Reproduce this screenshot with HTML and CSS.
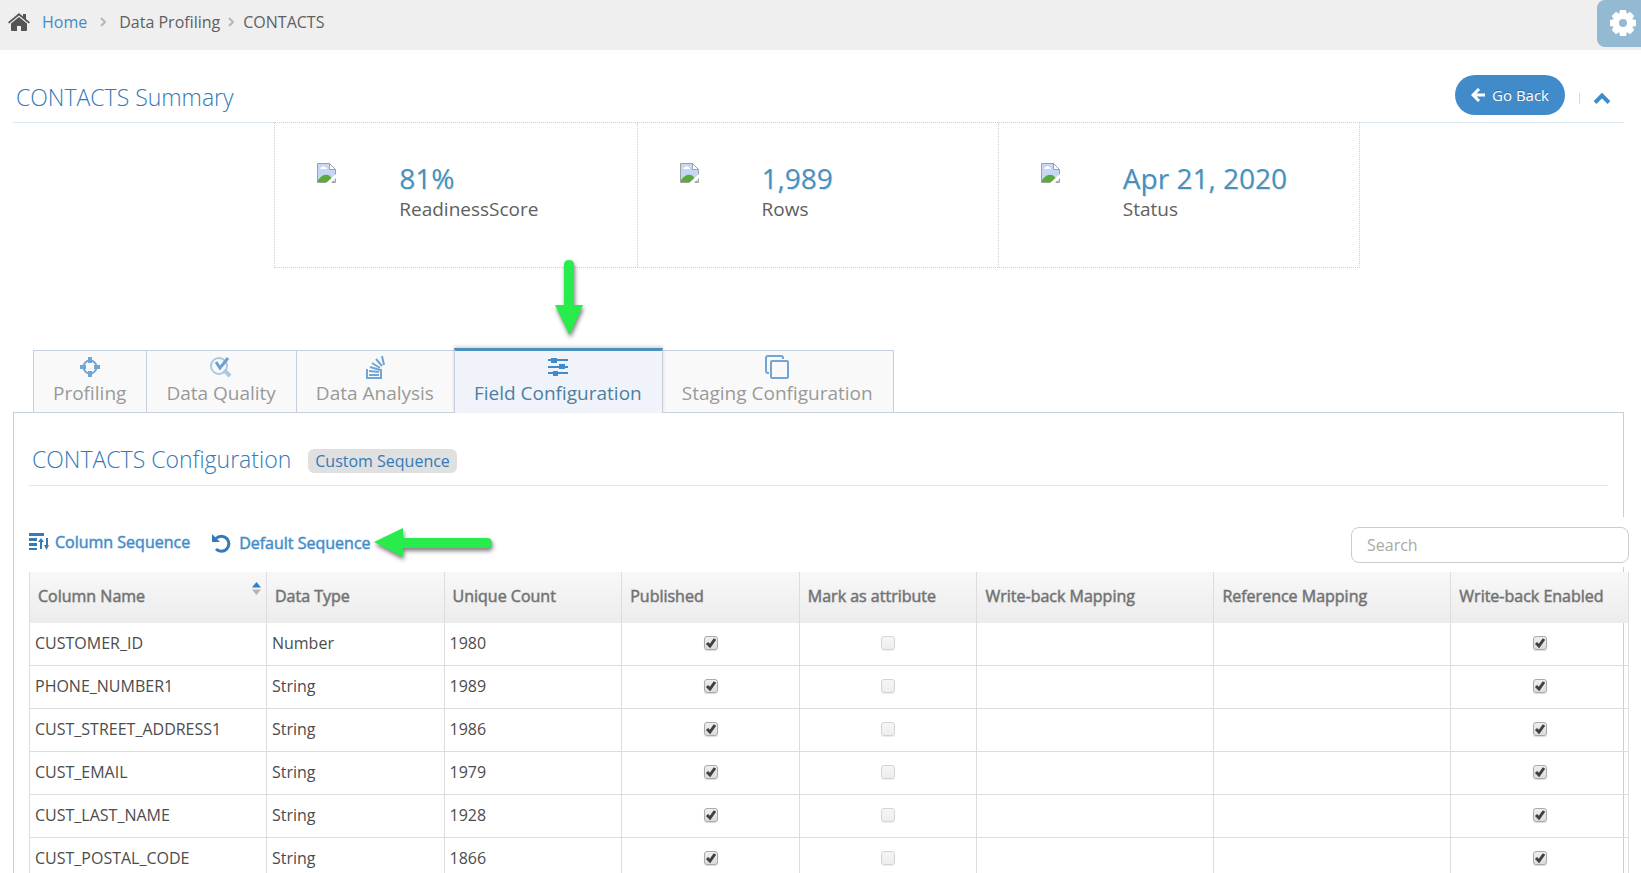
FILE: index.html
```html
<!DOCTYPE html>
<html lang="en">
<head>
    <meta charset="UTF-8">
    <meta name="viewport" content="width=device-width, initial-scale=1.0">
    <title>CONTACTS | Data Profiling</title>
    <link rel="stylesheet" href="styles.css">
</head>
<body>

<header class="topbar">
    <nav class="breadcrumb" aria-label="Breadcrumb">
        <svg class="home-icon" width="22" height="18" viewBox="0 0 22 18" fill="#555">
            <path d="M0 9.3 11 0l4 3.4V1h3v5l4 3.3-1.2 1.3L11 2.5 1.2 10.600z"/>
            <path d="M3 10.500 11 4l8 6.500V17q0 1-1 1h-5v-5H9v5H4q-1 0-1-1z"/>
        </svg>
        <a href="#">Home</a>
        <svg class="sep sep-wide" width="6" height="10" viewBox="0 0 6 10" fill="none" stroke="#b2b6bf" stroke-width="2"><path d="M1 1l4 4-4 4"/></svg>
        <span>Data Profiling</span>
        <svg class="sep" width="6" height="10" viewBox="0 0 6 10" fill="none" stroke="#b2b6bf" stroke-width="2"><path d="M1 1l4 4-4 4"/></svg>
        <span>CONTACTS</span>
    </nav>
    <button class="settings" aria-label="Settings">
        <svg width="26" height="26" viewBox="-13 -13 26 26">
            <g fill="#fff">
                <circle r="10"/>
                <path id="tooth" d="M-3-13h6l1 5h-8zM-3 13h6l1-5h-8z"/>
                <use href="#tooth" transform="rotate(45)"/>
                <use href="#tooth" transform="rotate(90)"/>
                <use href="#tooth" transform="rotate(135)"/>
            </g>
            <circle r="4" fill="#93b9d3"/>
        </svg>
    </button>
</header>

<main>
    <!-- Summary -->
    <div class="title-row">
        <h2>CONTACTS Summary</h2>
        <div class="title-tools">
            <button class="go-back">
                <svg width="14" height="14" viewBox="0 0 14 14" fill="none" stroke="#fff" stroke-width="3"><path d="M8 1 2 7l6 6M2 7h12"/></svg>
                Go Back
            </button>
            <span class="divider"></span>
            <button class="collapse" aria-label="Collapse">
                <svg width="16" height="11" viewBox="0 0 16 11" fill="none" stroke="#428bca" stroke-width="4"><path d="M1 9.500l7-7 7 7"/></svg>
            </button>
        </div>
    </div>

    <svg class="defs" width="0" height="0">
        <symbol id="missing" viewBox="0 0 19 20">
            <path d="M1 1h12l5 5v13H1z" fill="#c6d6f5"/>
            <path d="M3 6q0-2 2-2 1-2 3 0 2 0 2 2z" fill="#fff"/>
            <path d="M1 19v-2q6-8 12-4l4 6z" fill="#5aab3b"/>
            <path d="M.5.5h12l6 6v13H.5z" fill="none" stroke="#a0a0a0"/>
            <path d="M12.500 .5v6h6z" fill="#fff" stroke="#a0a0a0"/>
            <path d="M9 20 19 11v4L14 20z" fill="#fff"/>
        </symbol>
    </svg>

    <div class="stats">
        <div class="stat">
            <svg class="stat-img" width="19" height="20"><use href="#missing"/></svg>
            <div><div class="stat-value">81%</div><div class="stat-label">ReadinessScore</div></div>
        </div>
        <div class="stat">
            <svg class="stat-img" width="19" height="20"><use href="#missing"/></svg>
            <div><div class="stat-value">1,989</div><div class="stat-label">Rows</div></div>
        </div>
        <div class="stat">
            <svg class="stat-img" width="19" height="20"><use href="#missing"/></svg>
            <div><div class="stat-value">Apr 21, 2020</div><div class="stat-label">Status</div></div>
        </div>
    </div>

    <!-- Tabs -->
    <div class="tabs" role="tablist">
        <button class="tab" role="tab">
            <svg width="20" height="20" viewBox="0 0 20 20" fill="none" stroke="#428bca">
                <circle cx="10" cy="10" r="6.500" stroke-width="2"/>
                <path d="M10 0v6M10 14v6M0 10h6M14 10h6" stroke-width="4"/>
            </svg>
            Profiling
        </button>
        <button class="tab" role="tab">
            <svg width="22" height="20" viewBox="0 0 22 20" fill="none" stroke="#8fb8da">
                <circle cx="9" cy="9" r="8" stroke-width="2"/>
                <path d="M14 13l6 6" stroke-width="4"/>
                <path d="M6 5l4 6 8-10" stroke="#3f83c0" stroke-width="3"/>
            </svg>
            Data Quality
        </button>
        <button class="tab" role="tab">
            <svg width="20" height="24" viewBox="0 0 20 24" fill="none" stroke="#428bca" stroke-width="2">
                <path d="M2 14v9h14v-9M4 20h10M4 16l10 1M5 12l10 3M7 8l8 5M11 4l6 7M17 1l2 9"/>
            </svg>
            Data Analysis
        </button>
        <button class="tab active" role="tab" aria-selected="true">
            <svg width="20" height="20" viewBox="0 0 20 20" fill="#428bca">
                <path d="M0 2h20v2H0zM0 9h20v2H0zM0 15h20v2H0z"/>
                <path d="M3 1h6v5H3zM11 7h6v5h-6zM5 14h5v5H5z"/>
            </svg>
            Field Configuration
            <svg class="arrow arrow-down" width="34" height="84" viewBox="0 0 34 84">
                <path d="M12 8q0-5 5-5t5 5v40h9L17.500 78 3 48h9z" fill="#27ec4b"/>
            </svg>
        </button>
        <button class="tab" role="tab">
            <svg width="24" height="24" viewBox="0 0 24 24" fill="none" stroke="#428bca" stroke-width="2">
                <rect x="6" y="6" width="17" height="17" rx="1"/>
                <path d="M4 18H3q-2 0-2-2V3q0-2 2-2h13q2 0 2 2v1"/>
            </svg>
            Staging Configuration
        </button>
    </div>

    <!-- Field configuration -->
    <section class="panel">
        <div class="panel-title">
            <h2>CONTACTS Configuration</h2>
            <span class="badge">Custom Sequence</span>
        </div>

        <div class="table-area">
            <div class="toolbar">
                <a href="#">
                    <svg width="20" height="18" viewBox="0 0 20 18" fill="#337ab7">
                        <path d="M0 0h15v3H0zM0 5h8v3H0zM0 10h8v3H0zM0 15h8v2H0z"/>
                        <path d="M12 5l3 4h-2v7h-2V9H9zM17 5h2v7h1l-2.500 5L15 12h2z"/>
                    </svg>
                    Column Sequence
                </a>
                <a href="#" class="default-seq">
                    <svg width="19" height="19" viewBox="0 0 19 19">
                        <path d="M4 4.500A7.500 7.500 0 1 1 4 15" fill="none" stroke="#337ab7" stroke-width="3"/>
                        <path d="M0 0v8h8z" fill="#337ab7"/>
                    </svg>
                    Default Sequence
                    <svg class="arrow arrow-left" width="124" height="42" viewBox="0 0 124 42">
                        <path d="M3 18 32 4v10h84q5 0 5 5t-5 5H32v9z" fill="#27ec4b"/>
                    </svg>
                </a>
                <input class="search" type="text" placeholder="Search" aria-label="Search">
            </div>

            <table>
                <colgroup>
                    <col class="wide"><col><col><col><col><col class="wide"><col class="wide"><col>
                </colgroup>
                <thead>
                    <tr>
                        <th class="sorted">
                            <div class="th-inner">
                                Column Name
                                <svg width="9" height="13" viewBox="0 0 9 13"><path d="M0 5.500 4.500 0 9 5.500z" fill="#307ecc"/><path d="M0 7.500h9L4.500 13z" fill="#b4b4b4"/></svg>
                            </div>
                        </th>
                        <th>Data Type</th>
                        <th>Unique Count</th>
                        <th>Published</th>
                        <th>Mark as attribute</th>
                        <th>Write-back Mapping</th>
                        <th>Reference Mapping</th>
                        <th>Write-back Enabled</th>
                    </tr>
                </thead>
                <tbody id="fields"></tbody>
            </table>
        </div>
    </section>
</main>

<script>
    const fields = [
        ['CUSTOMER_ID', 'Number', 1980],
        ['PHONE_NUMBER1', 'String', 1989],
        ['CUST_STREET_ADDRESS1', 'String', 1986],
        ['CUST_EMAIL', 'String', 1979],
        ['CUST_LAST_NAME', 'String', 1928],
        ['CUST_POSTAL_CODE', 'String', 1866]
    ];

    // Build the table rows
    document.getElementById('fields').innerHTML = fields.map(([name, type, count]) => `
        <tr>
            <td>${name}</td>
            <td>${type}</td>
            <td>${count}</td>
            <td class="check"><input type="checkbox" aria-label="${name} published" checked></td>
            <td class="check"><input type="checkbox" aria-label="${name} as attribute" disabled></td>
            <td></td>
            <td></td>
            <td class="check"><input type="checkbox" aria-label="${name} write-back" checked></td>
        </tr>`).join('');
</script>

</body>
</html>
```
FILE: styles.css
```css
/* General Styles */
* {
    box-sizing: border-box;
}
body {
    font-family: "Open Sans", sans-serif;
    font-size: 16px;
    line-height: 24px;
    color: #606060;
    margin: 0;
    height: 100vh;
    overflow: hidden;
    background-color: #fff;
}
a {
    color: #428bca;
    text-decoration: none;
}
button {
    font-family: inherit;
    border: none;
    cursor: pointer;
}
h2 {
    font-size: 23px;
    font-weight: 300;
    line-height: 32px;
    color: #337ab7;
    margin: 0;
}
.defs {
    display: block;
}

/* Top bar */
.topbar {
    display: flex;
    justify-content: space-between;
    align-items: flex-start;
    height: 50px;
    background-color: #efefef;
}
.breadcrumb {
    display: flex;
    align-items: center;
    padding: 10px 8px;
}
.home-icon {
    margin-right: 12px;
}
.sep {
    margin: 0 9px 0 8px;
}
.sep-wide {
    margin: 0 13px;
}
.settings {
    width: 44px;
    height: 47px;
    padding: 0 0 2px 7px;
    background-color: #93b9d3;
    border-radius: 8px 0 0 8px;
}
.settings svg {
    display: block;
    margin: auto;
}

main {
    padding: 0 17px 0 13px;
}

/* Summary */
.title-row {
    display: flex;
    justify-content: space-between;
    align-items: flex-end;
    height: 73px;
    padding: 0 14px 7px 3px;
    border-bottom: 1px solid #d9e7f1;
}
.title-row h2 {
    margin-bottom: 2px;
}
.title-tools {
    display: flex;
    align-items: center;
}
.go-back {
    display: flex;
    align-items: center;
    gap: 7px;
    height: 40px;
    padding: 0 16px;
    font-size: 15px;
    color: #fff;
    background-color: #428bca;
    border-radius: 20px;
    text-shadow: 0 -1px 0 rgba(0, 0, 0, 0.25);
}
.divider {
    width: 1px;
    height: 11px;
    margin: 6px 14px 0;
    background-color: #d9d9d9;
}
.collapse {
    padding: 7px 0 0;
    background: none;
}
.collapse svg {
    display: block;
}

.stats {
    display: grid;
    grid-template-columns: repeat(3, 1fr);
    width: 67.4%;
    margin: -1px 0 0 16.22%;
    border: 1px dotted #d0d0d0;
    background-color: #fff;
}
.stat {
    display: flex;
    gap: 63px;
    height: 144px;
    padding: 37px 0 0 42px;
}
.stat + .stat {
    border-left: 1px dotted #d0d0d0;
}
.stat-img {
    margin-top: 3px;
}
.stat-value {
    font-size: 28px;
    line-height: 36px;
    color: #4490c1;
    text-shadow: 1px 1px 0 rgba(0, 0, 0, 0.15);
}
.stat-label {
    font-size: 19px;
    line-height: 26px;
}

/* Tabs */
.tabs {
    display: flex;
    align-items: flex-end;
    margin: 80px 20px 0;
}
.tab {
    display: flex;
    flex-direction: column;
    align-items: center;
    justify-content: flex-end;
    position: relative;
    height: 63px;
    padding: 0 20px 5px 19px;
    font-size: 19px;
    line-height: 28px;
    color: #999;
    background-color: #f9f9f9;
    border: 1px solid #c5d0dc;
    border-right: none;
}
.tab:last-child {
    border-right: 1px solid #c5d0dc;
}
.tab > svg:first-child {
    height: 24px;
    opacity: 0.75;
}
.tab.active {
    z-index: 1;
    height: 65px;
    padding-bottom: 6px;
    color: #4c7f9f;
    background-color: #f0f4fa;
    border-top: 3px solid #4c8fbd;
    border-right: 1px solid #c5d0dc;
    border-bottom: none;
    box-shadow: 0 -2px 3px rgba(0, 0, 0, 0.15);
}
.tab.active + .tab {
    border-left: none;
}
.tab.active > svg:first-child {
    opacity: 1;
}

/* Callout arrows */
.arrow {
    position: absolute;
    filter: drop-shadow(1px 3px 2px rgba(0, 0, 0, 0.5));
}
.arrow-down {
    left: 97px;
    bottom: 72px;
}
.arrow-left {
    left: 100%;
    top: -5px;
}

/* Panel */
.panel {
    margin-top: -1px;
    padding: 30px 15px 0;
    border: 1px solid #c5d0dc;
}
.panel-title {
    display: flex;
    align-items: center;
    gap: 17px;
    padding: 0 3px 10px;
    border-bottom: 1px solid #d9e7f1;
}
.badge {
    padding: 0 7px;
    margin-top: 3px;
    color: #337ab7;
    background-color: #e0e0e0;
    border-radius: 6px;
}
.table-area {
    margin: 31px -21px 0 0;
}
.toolbar {
    display: flex;
    align-items: center;
    height: 50px;
    margin-bottom: 5px;
    background-color: #fff;
}
.toolbar a {
    display: flex;
    align-items: center;
    gap: 6px;
    position: relative;
    margin-right: 22px;
    -webkit-text-stroke: 1px rgba(66, 139, 202, 0.5);
}
.toolbar .default-seq {
    gap: 8px;
    padding-top: 2px;
}
.search {
    width: 278px;
    height: 36px;
    margin: 5px 0 0 auto;
    padding: 1px 15px 0;
    font: inherit;
    border: 1px solid #ccc;
    border-radius: 8px;
}
.search::placeholder {
    color: #aaa;
}

table {
    width: 100%;
    table-layout: fixed;
    border-collapse: collapse;
}
col {
    width: 11.11%;
}
col.wide {
    width: 14.82%;
}
th, td {
    text-align: left;
    border: 1px solid #ddd;
}
th {
    height: 51px;
    padding: 0 8px 4px;
    font-weight: 400;
    white-space: nowrap;
    color: #707070;
    -webkit-text-stroke: 1px rgba(112, 112, 112, 0.5);
    border-top: none;
    border-bottom: none;
    background: linear-gradient(#f8f8f8, #ececec) padding-box;
}
.th-inner {
    display: flex;
    justify-content: space-between;
}
th.sorted {
    padding-right: 5px;
}
.sorted svg {
    margin-top: -2px;
}
td {
    height: 43px;
    padding: 0 5px 1px;
    color: #4c4c4c;
}
tbody tr:first-child td {
    height: 42px;
    border-top: none;
}
td.check {
    padding-bottom: 2px;
    text-align: center;
    line-height: 0;
}
td input {
    appearance: none;
    width: 14px;
    height: 14px;
    margin: 0;
    border: 1px solid #aaa;
    border-radius: 3px;
    background: linear-gradient(#eee, #dcdcdc);
    box-shadow: 0 1px 1px rgba(0, 0, 0, 0.15);
}
td input:checked {
    background: url("data:image/svg+xml,%3Csvg xmlns='http://www.w3.org/2000/svg' viewBox='0 0 12 12'%3E%3Cpath d='M2 6l3 3 5-7' fill='none' stroke='%23404040' stroke-width='3'/%3E%3C/svg%3E"), linear-gradient(#eee, #dcdcdc);
}
td input:disabled {
    opacity: 0.5;
}
```
